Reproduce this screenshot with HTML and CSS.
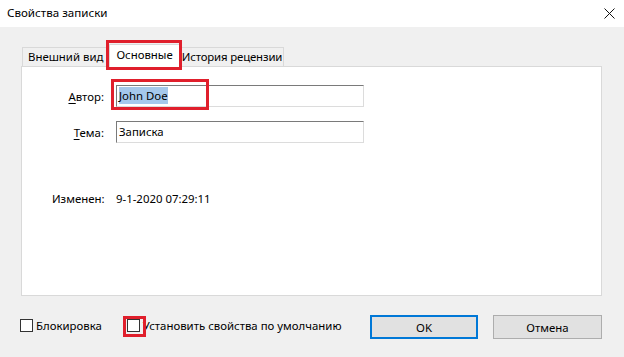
FILE: index.html
```html
<html lang="ru">
<head>
    <meta charset="UTF-8">
    <title>Свойства записки</title>
    <link rel="stylesheet" href="styles.css">
</head>
<body>

<div class="dialog">
  <div class="titlebar">
    <span class="title">Свойства записки</span>
    <svg class="close" width="11" height="11" viewBox="0 0 11 11">
      <path d="M0.5 0.5 L10.5 10.5 M10.5 0.5 L0.5 10.5" stroke="#111" stroke-width="1" fill="none"/>
    </svg>
  </div>

  <div class="content">
    <div class="tabs">
      <div class="tab">Внешний вид</div>
      <div class="tab active">Основные<span class="mark mark-tab"></span></div>
      <div class="tab tab-last">История рецензии</div>
    </div>

    <div class="panel">
      <div class="form">
        <label class="lbl"><u>А</u>втор:</label>
        <div class="field">
          <div class="input"><span class="sel">John Doe</span></div>
          <span class="mark mark-author"></span>
        </div>

        <label class="lbl"><u>Т</u>ема:</label>
        <div class="field">
          <div class="input">Записка</div>
        </div>

        <span class="lbl changed">Изменен:</span>
        <span class="value changed">9-1-2020 07:29:11</span>
      </div>
    </div>

    <div class="footer">
      <label class="check">
        <span class="box"></span>
        Блокировка
      </label>
      <label class="check check-default">
        <span class="box"><span class="mark mark-box"></span></span>
        Установить свойства по умолчанию
      </label>
      <div class="buttons">
        <button type="button" class="btn btn-ok">OK</button>
        <button type="button" class="btn">Отмена</button>
      </div>
    </div>
  </div>
</div>

</body>
</html>
```

FILE: styles.css
```css
body{
  margin: 0;
  font-family: 'Noto Sans', sans-serif;
  font-size: 11.4px;
  color: #000;
  background-color: #f0f0f0;
}
.dialog{
  width: 624px;
  height: 357px;
  overflow: hidden;
}
.titlebar{
  height: 27px;
  background-color: #fff;
  display: flex;
  align-items: center;
  justify-content: space-between;
  padding: 0 8px 2px 7px;
  box-sizing: border-box;
}
.title{
  font-size: 11.6px;
}
.close{
  margin-right: 1px;
  margin-top: 1px;
}

.content{
  padding: 17px 0 0 21px;
}

/* tabs */
.tabs{
  display: flex;
  align-items: flex-end;
  height: 22px;
  padding-left: 1px;
}
.tab{
  position: relative;
  height: 19px;
  line-height: 18px;
  padding: 0 5px;
  box-sizing: border-box;
  background-color: #f0f0f0;
  border: 1px solid #d9d9d9;
  border-bottom: 0;
  white-space: nowrap;
}
.tab + .tab{
  border-left: 0;
}
.tab.active{
  height: 23px;
  margin-bottom: -1px;
  padding: 0 6px;
  line-height: 20px;
  background-color: #fff;
  border-left: 1px solid #d9d9d9;
  z-index: 1;
}
.tab.active + .tab{
  border-left: 0;
}
.tab-last{
  padding: 0 1px 0 2px;
  letter-spacing: -0.15px;
}

/* red annotation frames */
.mark{
  position: absolute;
  border: 3px solid #e01f2c;
  box-sizing: border-box;
}
.mark-tab{
  left: -4px;
  right: -3px;
  top: -5px;
  height: 30px;
}
.mark-author{
  left: -5px;
  top: -6px;
  width: 98px;
  height: 31px;
}
.mark-box{
  left: -5px;
  top: -4px;
  width: 23px;
  height: 21px;
}

/* panel */
.panel{
  width: 581px;
  height: 230px;
  box-sizing: border-box;
  background-color: #fff;
  border: 1px solid #d9d9d9;
  padding: 18px 0 0 30px;
}
.form{
  display: grid;
  grid-template-columns: 52px 248px;
  column-gap: 12px;
  row-gap: 14px;
  align-items: center;
}
.lbl{
  text-align: right;
  white-space: nowrap;
}
.lbl u{
  text-decoration-thickness: 1px;
  text-underline-offset: 2px;
}
.field{
  position: relative;
}
.input{
  height: 22px;
  box-sizing: border-box;
  border: 1px solid #dcdcdc;
  border-top-color: #7a7a7a;
  border-left-color: #7a7a7a;
  padding: 0 2px;
  line-height: 19px;
  white-space: nowrap;
}
.sel{
  background-color: #a5c8ec;
  padding: 1px 0;
}
.changed{
  margin-top: 34px;
}
.value{
  white-space: nowrap;
}

/* footer */
.footer{
  width: 582px;
  display: flex;
  align-items: center;
  margin-top: 19px;
  margin-left: -1px;
}
.check{
  display: flex;
  align-items: center;
  gap: 3px;
  white-space: nowrap;
  margin-top: -4px;
}
.check-default{
  margin-left: 25px;
}
.box{
  position: relative;
  width: 13px;
  height: 13px;
  box-sizing: border-box;
  border: 1px solid #333;
  background-color: #fff;
}
.buttons{
  display: flex;
  gap: 15px;
  margin-left: auto;
}
.btn{
  font-family: 'Noto Sans', sans-serif;
  font-size: 11.4px;
  width: 109px;
  height: 24px;
  padding: 0;
  background-color: #e1e1e1;
  border: 1px solid #adadad;
  color: #000;
}
.btn-ok{
  width: 108px;
  border: 2px solid #0078d7;
}
```
